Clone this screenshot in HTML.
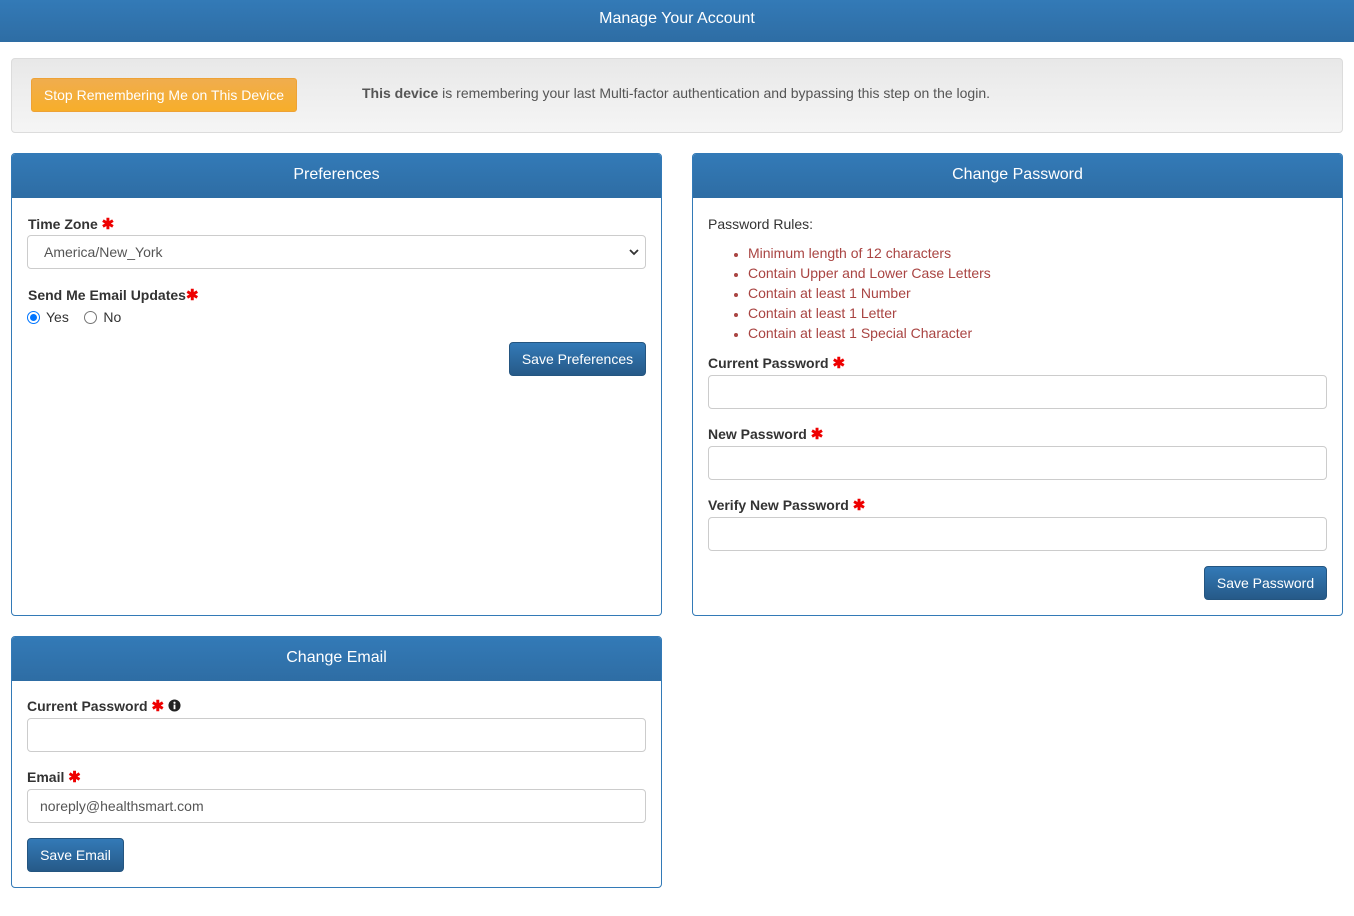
<!DOCTYPE html>
<html><head><meta charset="utf-8"><style>
*{box-sizing:border-box}
body{margin:0;width:1354px;height:916px;background:#fff;font-family:"Liberation Sans",Arial,sans-serif;font-size:14px;color:#333;position:relative;overflow:hidden}
.top{position:absolute;left:0;top:0;width:1354px;height:42px;background:linear-gradient(#337ab7,#2e6da4);color:#fff;font-size:16px;text-align:center;line-height:38px}
.well{position:absolute;left:11px;top:58px;width:1332px;height:75px;background:linear-gradient(#e8e8e8,#f5f5f5);border:1px solid #dcdcdc;border-radius:4px}
.orange{position:absolute;left:19px;top:19px;width:266px;height:34px;background:linear-gradient(#f0ad4e,#f7ae2a);border:1px solid #eea236;border-radius:3px;color:#fff;font-size:14px;line-height:32px;text-align:center}
.wtext{position:absolute;left:350px;top:26px;color:#555;font-size:14px}
.panel{position:absolute;border:1px solid #337ab7;border-radius:4px;overflow:hidden}
.ph{height:44px;background:linear-gradient(#337ab7,#2e6da4);color:#fff;font-size:16px;text-align:center;line-height:42px}
.lbl{position:absolute;font-weight:bold;font-size:14px;color:#333}
.st{color:#e00;font-size:15px}
.inp{position:absolute;height:34px;border:1px solid #ccc;border-radius:4px;background:#fff;font-size:14px;color:#555;line-height:32px;padding-left:12px}
.btn{position:absolute;height:34px;background:linear-gradient(#337ab7,#265a88);border:1px solid #245580;border-radius:4px;color:#fff;font-size:14px;line-height:32px;text-align:center}
ul{position:absolute;margin:0;padding-left:55px;color:#a94442;line-height:20px;font-size:14px}
li::marker{font-size:12px}
.rad{display:inline-block;width:13px;height:13px;border-radius:50%;border:1px solid #767676;vertical-align:-2px;margin-right:6px;position:relative;background:#fff}
.rad.on{border:1px solid #0075ff}
.rad.on::after{content:"";position:absolute;left:2px;top:2px;width:7px;height:7px;border-radius:50%;background:#0075ff}
</style></head><body>
<div class="top">Manage Your Account</div>
<div class="well"><div class="orange">Stop Remembering Me on This Device</div>
<div class="wtext"><b>This device</b> is remembering your last Multi-factor authentication and bypassing this step on the login.</div></div>

<div class="panel" style="left:11px;top:153px;width:651px;height:463px">
<div class="ph">Preferences</div>
<div class="lbl" style="left:16px;top:61px">Time Zone <span class="st">✱</span></div>
<div class="inp" style="left:15px;top:81px;width:619px;padding-left:16px">America/New_York<svg style="position:absolute;right:6px;top:12px" width="10" height="8" viewBox="0 0 10 8"><path d="M1 2l4 4 4-4" stroke="#333" stroke-width="1.8" fill="none"/></svg></div>
<div class="lbl" style="left:16px;top:132px">Send Me Email Updates<span class="st">✱</span></div>
<div style="position:absolute;left:15px;top:155px"><span class="rad on"></span>Yes &nbsp; &nbsp;<span class="rad"></span>No</div>
<div class="btn" style="left:497px;top:188px;width:137px">Save Preferences</div>
</div>

<div class="panel" style="left:692px;top:153px;width:651px;height:463px">
<div class="ph">Change Password</div>
<div style="position:absolute;left:15px;top:62px">Password Rules:</div>
<ul style="left:0;top:89px"><li>Minimum length of 12 characters</li><li>Contain Upper and Lower Case Letters</li><li>Contain at least 1 Number</li><li>Contain at least 1 Letter</li><li>Contain at least 1 Special Character</li></ul>
<div class="lbl" style="left:15px;top:200px">Current Password <span class="st">✱</span></div>
<div class="inp" style="left:15px;top:221px;width:619px"></div>
<div class="lbl" style="left:15px;top:271px">New Password <span class="st">✱</span></div>
<div class="inp" style="left:15px;top:292px;width:619px"></div>
<div class="lbl" style="left:15px;top:342px">Verify New Password <span class="st">✱</span></div>
<div class="inp" style="left:15px;top:363px;width:619px"></div>
<div class="btn" style="left:511px;top:412px;width:123px">Save Password</div>
</div>

<div class="panel" style="left:11px;top:636px;width:651px;height:252px">
<div class="ph">Change Email</div>
<div class="lbl" style="left:15px;top:60px">Current Password <span class="st">✱</span> <svg width="13" height="13" viewBox="0 0 14 14" style="vertical-align:-1px"><circle cx="7" cy="7" r="6.5" fill="#222"/><rect x="6" y="6" width="2" height="5" fill="#fff"/><circle cx="7" cy="4" r="1.2" fill="#fff"/></svg></div>
<div class="inp" style="left:15px;top:81px;width:619px"></div>
<div class="lbl" style="left:15px;top:131px">Email <span class="st">✱</span></div>
<div class="inp" style="left:15px;top:152px;width:619px">noreply@healthsmart.com</div>
<div class="btn" style="left:15px;top:201px;width:97px">Save Email</div>
</div>
</body></html>
